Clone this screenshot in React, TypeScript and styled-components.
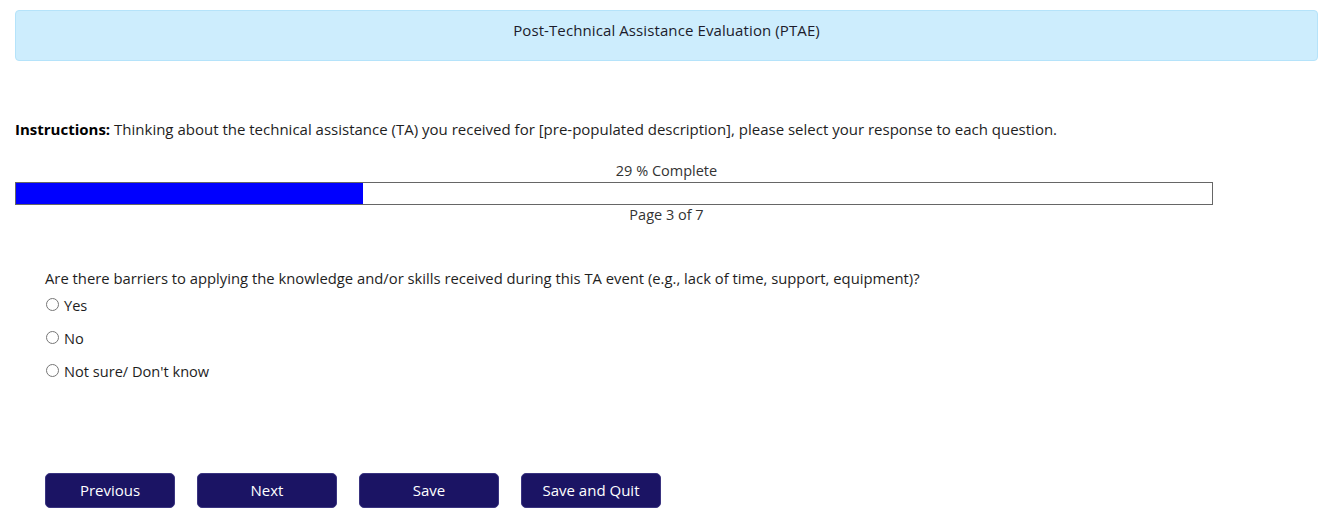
import React from "react";
import styled, { createGlobalStyle } from "styled-components";

const Global = createGlobalStyle`
  html, body { margin: 0; padding: 0; background: #fff; }
  body {
    font-family: "Open Sans", "Noto Sans", sans-serif;
    color: #1e1e1e;
    font-size: 14px;
  }
  * { box-sizing: border-box; }
`;

const Page = styled.div`
  padding: 10px 17px 0 15px;
  display: flex;
  flex-direction: column;
`;

const Header = styled.div`
  height: 51px;
  background: #cdedfd;
  border: 1px solid #b5e3fa;
  border-radius: 4px;
  display: flex;
  align-items: center;
  justify-content: center;
  font-size: 15px;
  letter-spacing: 0.1px;
  color: #1c1c2c;
  padding-bottom: 11px;
`;

const Instructions = styled.p`
  margin: 58px 0 0;
  font-size: 15px;
  line-height: 20px;
  color: #1e1e1e;
`;

const Strong = styled.strong`
  font-weight: 700;
  color: #000;
`;

const Caption = styled.div<{ $top?: number }>`
  text-align: center;
  font-size: 14.5px;
  line-height: 18px;
  color: #333;
  margin-top: ${(p) => p.$top ?? 0}px;
`;

const ProgressTrack = styled.div`
  width: 1198px;
  height: 23px;
  border: 1px solid #666;
  background: #fff;
  margin: 2px 0 1px;
`;

const ProgressFill = styled.div`
  height: 100%;
  background: #0000ff;
`;

const Question = styled.fieldset`
  border: none;
  margin: 44px 0 0;
  padding: 0 0 0 30px;
  display: flex;
  flex-direction: column;
`;

const Legend = styled.legend`
  padding: 0;
  font-size: 14.8px;
  line-height: 20px;
  color: #1e1e1e;
`;

const Option = styled.label`
  display: flex;
  align-items: center;
  height: 33px;
  font-size: 14.6px;
  color: #1e1e1e;
`;

const Radio = styled.input`
  width: 13px;
  height: 13px;
  margin: 0 5px 0 1px;
  accent-color: #1b1464;
`;

const ButtonRow = styled.div`
  display: flex;
  gap: 22px;
  margin-top: 86px;
  padding-left: 30px;
`;

const Button = styled.button<{ $w: number }>`
  width: ${(p) => p.$w}px;
  height: 35px;
  padding: 0 0 2px;
  background: #1b1464;
  color: #fff;
  border: 1px solid #3a3480;
  border-radius: 5px;
  font-family: inherit;
  font-size: 15px;
  cursor: pointer;
`;

export default function App() {
  const pct = 29;
  return (
    <>
      <Global />
      <Page>
        <Header>Post-Technical Assistance Evaluation (PTAE)</Header>
        <Instructions>
          <Strong>Instructions:</Strong> Thinking about the technical assistance (TA) you received for [pre-populated description], please select your response to each question.
        </Instructions>
        <Caption $top={23}>{pct} % Complete</Caption>
        <ProgressTrack>
          <ProgressFill style={{ width: `${pct}%` }} />
        </ProgressTrack>
        <Caption>Page 3 of 7</Caption>
        <Question>
          <Legend>Are there barriers to applying the knowledge and/or skills received during this TA event (e.g., lack of time, support, equipment)?</Legend>
          <Option><Radio type="radio" name="q" />Yes</Option>
          <Option><Radio type="radio" name="q" />No</Option>
          <Option><Radio type="radio" name="q" />Not sure/ Don't know</Option>
        </Question>
        <ButtonRow>
          <Button $w={130}>Previous</Button>
          <Button $w={140}>Next</Button>
          <Button $w={140}>Save</Button>
          <Button $w={140}>Save and Quit</Button>
        </ButtonRow>
      </Page>
    </>
  );
}
